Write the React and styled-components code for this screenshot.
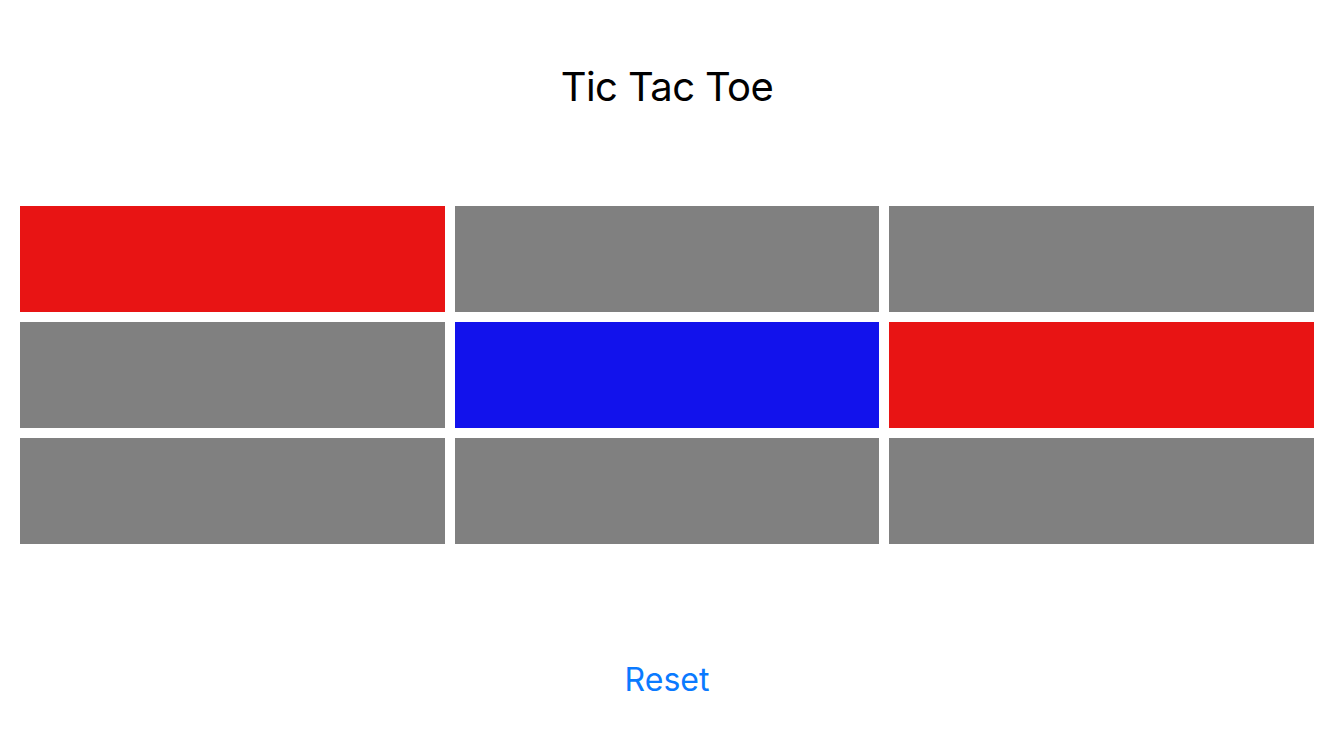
import React, { useState } from "react";
import styled, { createGlobalStyle } from "styled-components";

const GlobalStyle = createGlobalStyle`
  body {
    margin: 0;
    background: #ffffff;
    font-family: Inter, "Noto Sans", sans-serif;
  }
`;

const COLORS = {
  x: "#e81414",
  o: "#1212ec",
  empty: "#808080",
};

const initialBoard = ["x", null, null, null, "o", "x", null, null, null];

const App = () => {
  const [board, setBoard] = useState(initialBoard);

  return (
    <>
      <GlobalStyle />
      <Page>
        <Title>Tic Tac Toe</Title>
        <Board>
          {board.map((cell, i) => (
            <Cell key={i} $mark={cell} />
          ))}
        </Board>
        <ResetButton onClick={() => setBoard(Array(9).fill(null))}>
          Reset
        </ResetButton>
      </Page>
    </>
  );
};

const Page = styled.div`
  display: flex;
  flex-direction: column;
  align-items: stretch;
  height: 100vh;
`;

const Title = styled.h1`
  margin: 62px 0 0;
  font-size: 40px;
  font-weight: 400;
  letter-spacing: -0.6px;
  line-height: 50px;
  text-align: center;
  color: #000;
`;

const Board = styled.div`
  display: grid;
  grid-template-columns: repeat(3, 1fr);
  grid-auto-rows: 106px;
  gap: 10px;
  padding: 0 20px;
  margin-top: 94px;
`;

const Cell = styled.div`
  background: ${({ $mark }) => COLORS[$mark] || COLORS.empty};
`;

const ResetButton = styled.button`
  align-self: center;
  margin-top: 116px;
  padding: 0;
  border: none;
  background: none;
  font-family: Inter, "Noto Sans", sans-serif;
  font-size: 32px;
  line-height: 40px;
  color: #0a7aff;
  cursor: pointer;
`;

export default App;
